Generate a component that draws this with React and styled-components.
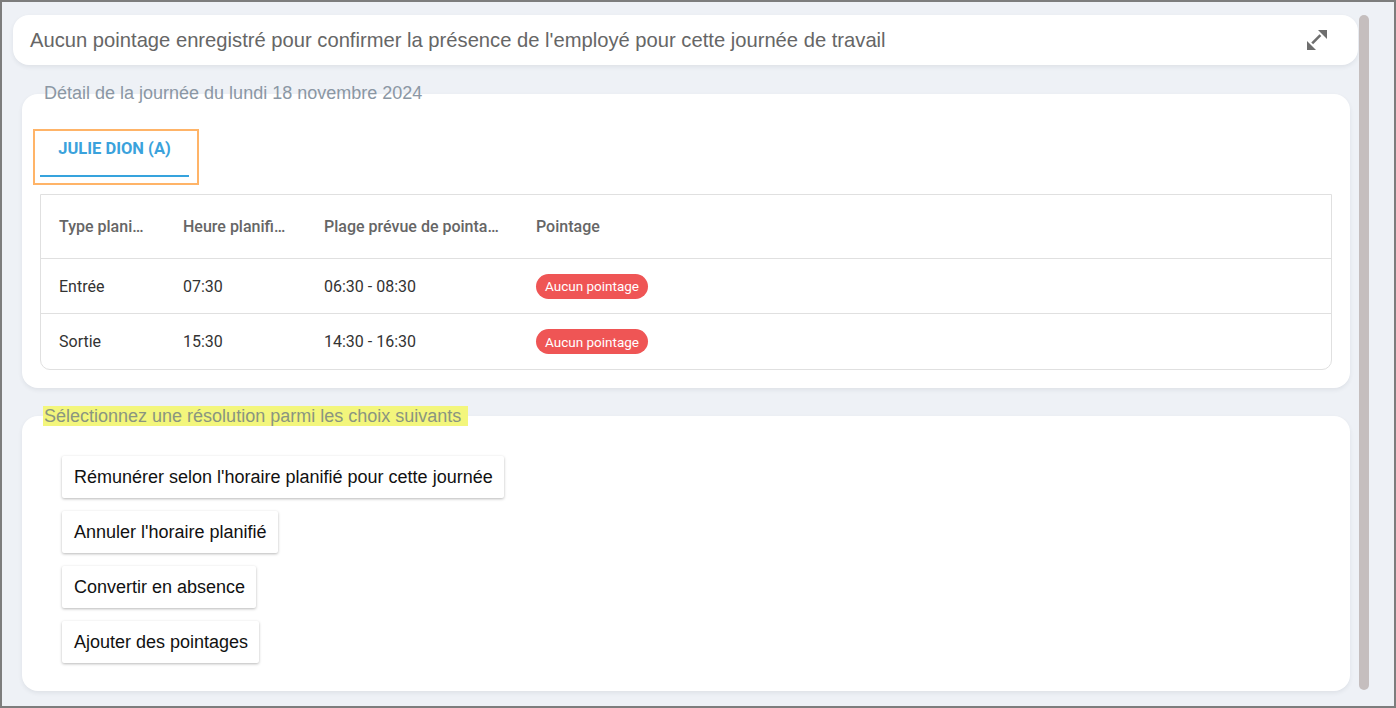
import React from "react";
import styled, { createGlobalStyle } from "styled-components";

const GlobalStyle = createGlobalStyle`
  html, body { margin: 0; padding: 0; }
  body { font-family: "Liberation Sans", Arial, sans-serif; background: #eef1f6; }
  * { box-sizing: border-box; }
`;

const Frame = styled.div`
  width: 1396px;
  height: 708px;
  border: 2px solid #7d7d7d;
  background: #eef1f6;
  display: flex;
  padding: 13px 0 0 11px;
  overflow: hidden;
`;

const Main = styled.div`
  width: 1345px;
  display: flex;
  flex-direction: column;
`;

const ScrollTrack = styled.div`
  width: 10px;
  height: 675px;
  margin: 0 25px 0 1px;
  border-radius: 5px;
  background: #c5bebe;
  flex-shrink: 0;
`;

const Banner = styled.div`
  height: 50px;
  background: #fff;
  border-radius: 16px;
  box-shadow: 0 2px 4px rgba(40, 50, 70, 0.08);
  display: flex;
  align-items: center;
  justify-content: space-between;
  padding: 0 30px 0 17px;
`;

const BannerText = styled.span`
  font-family: "Liberation Sans", Arial, sans-serif;
  font-size: 20.2px;
  color: #666;
`;

const IconButton = styled.button`
  border: 0;
  background: none;
  padding: 0;
  width: 22px;
  height: 22px;
  display: flex;
  cursor: pointer;
  color: #6e6e6e;
`;

const Section = styled.section`
  display: flex;
  flex-direction: column;
  margin: ${(p) => p.$top}px 8px 0 9px;
`;

const Legend = styled.div`
  position: relative;
  z-index: 1;
  margin-left: ${(p) => (p.$mark ? 21 : 22)}px;
  font-family: "Liberation Sans", Arial, sans-serif;
  font-size: 18px;
  line-height: ${(p) => (p.$mark ? 19 : 20)}px;
  height: ${(p) => (p.$mark ? 19 : 20)}px;
  color: #8b97a4;
  white-space: nowrap;
`;

const Mark = styled.mark`
  background: #f3f67c;
  color: #8a9580;
  padding: 0 7px 0 1px;
`;

const Card = styled.div`
  background: #fff;
  border-radius: 16px;
  box-shadow: 0 2px 4px rgba(40, 50, 70, 0.08);
  margin-top: ${(p) => p.$overlap}px;
  padding: ${(p) => p.$pad};
  display: flex;
  flex-direction: column;
  align-items: ${(p) => (p.$start ? "flex-start" : "stretch")};
  gap: ${(p) => p.$gap || 0}px;
`;

const TabFocus = styled.div`
  align-self: flex-start;
  margin: 0 0 9px -7px;
  border: 2px solid #ffb468;
  padding: 0 8px 6px 5px;
`;

const Tab = styled.div`
  width: 149px;
  height: 46px;
  padding-top: 9px;
  border-bottom: 2px solid #36a3dd;
  font-family: Roboto, "Liberation Sans", sans-serif;
  font-weight: 700;
  font-size: 16.5px;
  line-height: 18px;
  color: #3aa2dc;
  text-align: center;
`;

const Table = styled.table`
  width: 100%;
  border-collapse: separate;
  border-spacing: 0;
  table-layout: fixed;
  border: 1px solid #e0e0e0;
  border-radius: 0 0 10px 10px;
  font-family: Roboto, "Liberation Sans", sans-serif;
  font-size: 16px;
`;

const HeadCell = styled.th`
  height: 64px;
  padding: 0 18px;
  text-align: left;
  font-weight: 500;
  color: #666;
  white-space: nowrap;
  overflow: hidden;
  text-overflow: ellipsis;
  border-bottom: 1px solid #e0e0e0;
`;

const Cell = styled.td`
  height: 55px;
  padding: 0 18px;
  color: #333;
  white-space: nowrap;
  border-bottom: ${(p) => (p.$last ? "0" : "1px solid #e0e0e0")};
`;

const Badge = styled.span`
  display: inline-flex;
  align-items: center;
  height: 25px;
  padding: 0 9px;
  border-radius: 13px;
  background: #ef5555;
  color: #fff;
  font-size: 13.5px;
`;

const ChoiceButton = styled.button`
  height: 42px;
  padding: 0 11px 0 12px;
  border: 0;
  border-radius: 2px;
  background: #fff;
  box-shadow: 0 1px 3px rgba(0, 0, 0, 0.28);
  font-family: "Liberation Sans", Arial, sans-serif;
  font-size: 18px;
  color: #111;
  cursor: pointer;
`;

const ExpandIcon = () => (
  <svg width="22" height="22" viewBox="0 0 22 22" fill="currentColor">
    <path d="M6.2 14.4 L14.4 6.2" stroke="currentColor" strokeWidth="2.6" />
    <polygon points="21,1 21,10 12,1" />
    <polygon points="1,21 1,12 10,21" />
  </svg>
);

const columns = [
  { label: "Type planifié", width: 124 },
  { label: "Heure planifiée", width: 141 },
  { label: "Plage prévue de pointage", width: 212 },
  { label: "Pointage" },
];

const rows = [
  { type: "Entrée", time: "07:30", range: "06:30 - 08:30" },
  { type: "Sortie", time: "15:30", range: "14:30 - 16:30" },
];

const choices = [
  "Rémunérer selon l'horaire planifié pour cette journée",
  "Annuler l'horaire planifié",
  "Convertir en absence",
  "Ajouter des pointages",
];

export default function App() {
  return (
    <>
      <GlobalStyle />
      <Frame>
        <Main>
          <Banner>
            <BannerText>
              Aucun pointage enregistré pour confirmer la présence de l'employé pour cette journée de travail
            </BannerText>
            <IconButton aria-label="Agrandir">
              <ExpandIcon />
            </IconButton>
          </Banner>

          <Section $top={18}>
            <Legend>Détail de la journée du lundi 18 novembre 2024</Legend>
            <Card $overlap={-9} $pad="35px 18px 18px">
              <TabFocus>
                <Tab>JULIE DION (A)</Tab>
              </TabFocus>
              <Table>
                <colgroup>
                  {columns.map((c) => (
                    <col key={c.label} style={c.width ? { width: c.width } : undefined} />
                  ))}
                </colgroup>
                <thead>
                  <tr>
                    {columns.map((c) => (
                      <HeadCell key={c.label}>{c.label}</HeadCell>
                    ))}
                  </tr>
                </thead>
                <tbody>
                  {rows.map((r, i) => {
                    const last = i === rows.length - 1;
                    return (
                      <tr key={r.type}>
                        <Cell $last={last}>{r.type}</Cell>
                        <Cell $last={last}>{r.time}</Cell>
                        <Cell $last={last}>{r.range}</Cell>
                        <Cell $last={last}>
                          <Badge>Aucun pointage</Badge>
                        </Cell>
                      </tr>
                    );
                  })}
                </tbody>
              </Table>
            </Card>
          </Section>

          <Section $top={19}>
            <Legend $mark>
              <Mark>Sélectionnez une résolution parmi les choix suivants</Mark>
            </Legend>
            <Card $overlap={-10} $pad="40px 40px 28px" $start $gap={13}>
              {choices.map((c) => (
                <ChoiceButton key={c}>{c}</ChoiceButton>
              ))}
            </Card>
          </Section>
        </Main>
        <ScrollTrack />
      </Frame>
    </>
  );
}
